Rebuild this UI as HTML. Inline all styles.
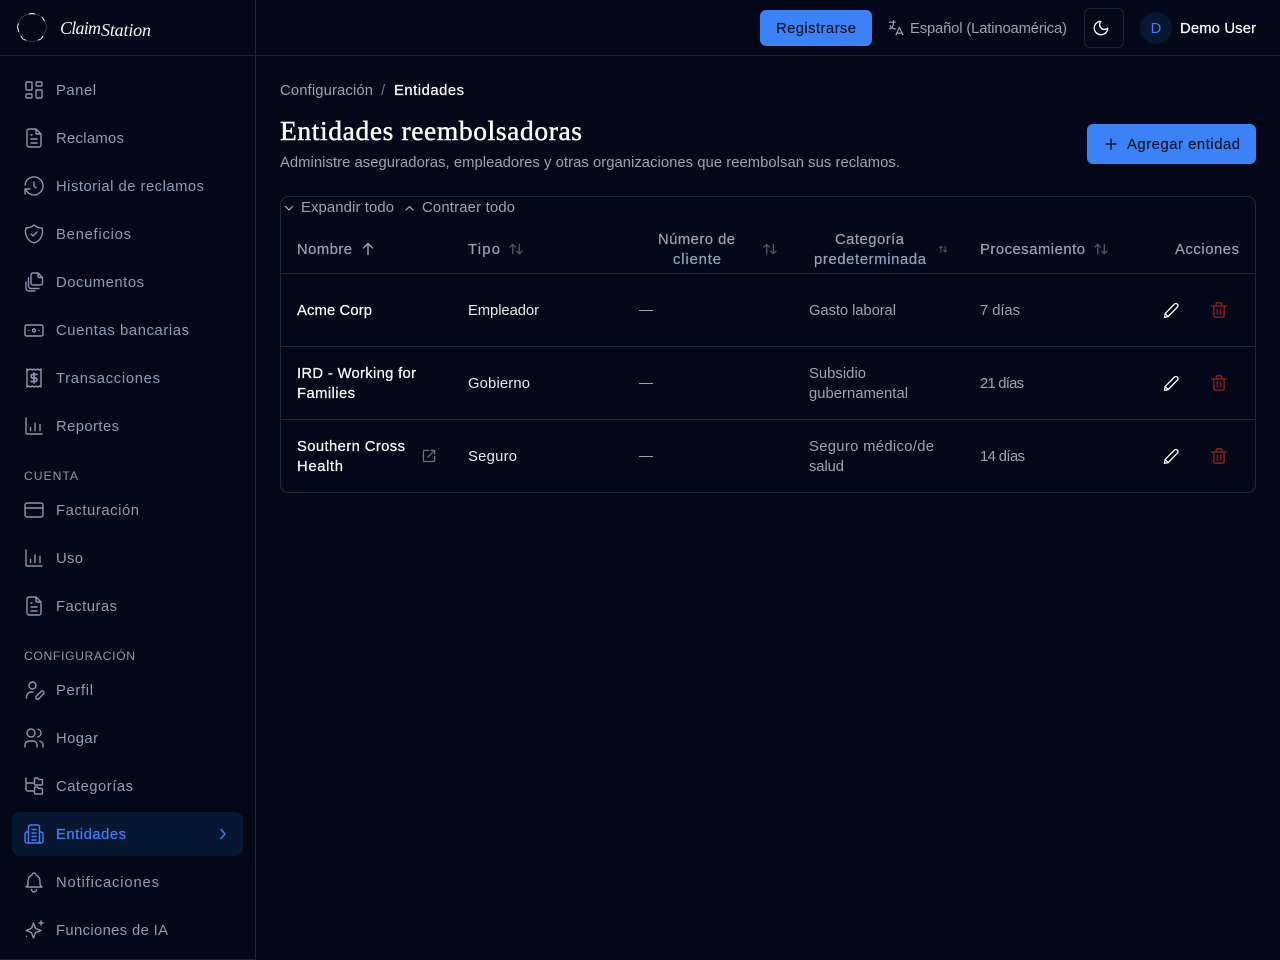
<!DOCTYPE html>
<html lang="es">
<head>
<meta charset="utf-8">
<title>Entidades reembolsadoras</title>
<style>
html,body{margin:0;padding:0;background:#020817;width:1280px;height:960px;overflow:hidden}
svg{display:block}
text{font-family:"Liberation Sans",sans-serif;font-size:14.8px;white-space:pre}
.n{fill:#8e9cb3}
.l{font-size:12.2px;fill:#8a96ad}
.mu{fill:#9ca3af}
.w{fill:#fff}
.e{fill:#e5e7eb}
.h{fill:#94a3b8}
.m{stroke-width:.2px;stroke:currentColor}
.i{fill:none;stroke:#8a96ad;stroke-width:1.4;stroke-linecap:round;stroke-linejoin:round}
.lg{font-family:"Liberation Serif",serif;font-style:italic;fill:#f4f5f7;font-size:18px}
</style>
</head>
<body>
<svg width="1280" height="960" viewBox="0 0 1280 960" xmlns="http://www.w3.org/2000/svg">
<defs>
<g id="dash"><path d="M5 4h4a1 1 0 0 1 1 1v6a1 1 0 0 1-1 1H5a1 1 0 0 1-1-1V5a1 1 0 0 1 1-1M5 16h4a1 1 0 0 1 1 1v2a1 1 0 0 1-1 1H5a1 1 0 0 1-1-1v-2a1 1 0 0 1 1-1M15 12h4a1 1 0 0 1 1 1v6a1 1 0 0 1-1 1h-4a1 1 0 0 1-1-1v-6a1 1 0 0 1 1-1M15 4h4a1 1 0 0 1 1 1v2a1 1 0 0 1-1 1h-4a1 1 0 0 1-1-1V5a1 1 0 0 1 1-1"/></g>
<g id="file"><path d="M14 3v4a1 1 0 0 0 1 1h4M17 21H7a2 2 0 0 1-2-2V5a2 2 0 0 1 2-2h7l5 5v11a2 2 0 0 1-2 2zM9 9h1M9 13h6M9 17h6"/></g>
<g id="hist"><path d="M12 8v4l2 2M3.05 11a9 9 0 1 1 .5 4m-.5 5v-5h5"/></g>
<g id="shield"><path d="M12 3a12 12 0 0 0 8 3a12 12 0 0 1-8 15a12 12 0 0 1-8-15a12 12 0 0 0 8-3M9 12l2 2l4-4"/></g>
<g id="docs"><path d="M11 3H16l4.500 4.500V13a2 2 0 0 1-2 2h-7.500a2 2 0 0 1-2-2V5a2 2 0 0 1 2-2zM16 3v3a1.500 1.500 0 0 0 1.500 1.500h3M6.500 8v8a2.500 2.500 0 0 0 2.500 2.500h8M4 12v6a3 3 0 0 0 3 3h6"/></g>
<g id="cash"><rect x="3" y="7" width="18" height="11" rx="1.500"/><circle cx="12" cy="12.500" r="1.500"/><path d="M7 12.500v.01M17 12.500v.01"/></g>
<g id="receipt"><path d="M5 21V3l1.750 1l1.750-1l1.750 1L12 3l1.750 1l1.750-1l1.750 1L19 3v18l-1.750-1l-1.750 1l-1.750-1L12 21l-1.750-1l-1.750 1l-1.750-1z"/><path d="M15 8.500h-4.200a1.750 1.750 0 0 0 0 3.500h2.400a1.750 1.750 0 0 1 0 3.500H9M12 7v10" stroke-width="1.700"/></g>
<g id="chart"><path d="M4 4v15a1 1 0 0 0 1 1h15M8.500 13.500v3M13 9v7.500M18 10.500v6"/></g>
<g id="card"><rect x="3" y="5" width="18" height="14" rx="2"/><path d="M3 10h18"/></g>
<g id="userpen"><circle cx="10.500" cy="7.500" r="3.500"/><path d="M4.500 20v-1a5 5 0 0 1 5-5h1.500M14 21v-2.500l5-5a1.700 1.700 0 0 1 2.500 2.500l-5 5z"/></g>
<g id="users"><path d="M5 7a4 4 0 1 0 8 0a4 4 0 1 0-8 0M3 21v-2a4 4 0 0 1 4-4h4a4 4 0 0 1 4 4v2M16 3.130a4 4 0 0 1 0 7.750M21 21v-2a4 4 0 0 0-3-3.850"/></g>
<g id="cats"><path d="M4 4v11a2 2 0 0 0 2 2h5.500M4 9h7.500M13.500 4h2l1.500 1.500h2.500a1 1 0 0 1 1 1V10a1 1 0 0 1-1 1h-6a1 1 0 0 1-1-1V5a1 1 0 0 1 1-1zM13.500 13h2l1.500 1.500h2.500a1 1 0 0 1 1 1V19a1 1 0 0 1-1 1h-6a1 1 0 0 1-1-1v-5a1 1 0 0 1 1-1z"/></g>
<g id="build"><path d="M6.500 21V5a2 2 0 0 1 2-2h7a2 2 0 0 1 2 2v16M6.500 10H5a2 2 0 0 0-2 2v7a2 2 0 0 0 2 2h14a2 2 0 0 0 2-2v-7a2 2 0 0 0-2-2h-1.500M10 7.500h4M10 11h4M10 14.500h4M10 18h4"/></g>
<g id="bell"><path d="M10 5a2 2 0 1 1 4 0a7 7 0 0 1 4 6v3a4 4 0 0 0 2 3H4a4 4 0 0 0 2-3v-3a7 7 0 0 1 4-6M9.500 19.500a2.500 2.500 0 0 0 5 0"/></g>
<g id="spark"><path d="M11.500 5l1.800 4.700a2 2 0 0 0 1 1L19 12.500l-4.700 1.800a2 2 0 0 0-1 1L11.500 20l-1.800-4.700a2 2 0 0 0-1-1L4 12.500l4.700-1.800a2 2 0 0 0 1-1zM19 3v4M17 5h4M4.500 18.500v.01"/></g>
<g id="sort"><path d="M3 9l4-4l4 4M7 5v14M21 15l-4 4l-4-4M17 19V5"/></g>
<g id="pencil"><path d="M4.500 20.500l.8-4.300L16 5.300a2.400 2.400 0 0 1 3.400 3.400L8.800 19.700zM5.300 16.200l3.500 3.500"/></g>
<g id="trash"><path d="M3 7h18M5.500 7v12a2 2 0 0 0 2 2h9a2 2 0 0 0 2-2V7M8.500 7V4.500a1.500 1.500 0 0 1 1.500-1.500h4a1.500 1.500 0 0 1 1.500 1.500V7M10 11v6M14 11v6"/></g>
</defs>

<rect width="1280" height="960" fill="#020817"/>
<path d="M255.500 0V960M0 55.500H1280" stroke="#1e293b" fill="none"/>
<path d="M0 959.500H255" stroke="#1e293b" fill="none"/>

<!-- logo -->
<path d="M32 13.500C36 14.500 39 15 42 17C45 21 46 24 46.500 27C45.500 32 44 35.500 41 39C37 40.500 35 41.500 32 41.500C28 41.500 26 40.500 23 39C20 35.500 18.500 32 17.500 27C18 24 19 21 22 17C25 15 28 14.500 32 13.500Z" fill="none" stroke="#fff" stroke-opacity=".25" stroke-width=".8"/>
<path d="M29 14.100Q30.500 13.700 32 13.500Q33.500 13.700 35 14.100M18.300 23.500Q18 25 17.500 27Q18 29.500 18.800 31.500M26 40.200Q24.500 39.700 23 39Q21.800 37.600 21 36.300M38 40.200Q39.500 39.700 41 39Q42.300 37.500 43 36M42 17Q43.500 19 44.500 21" fill="none" stroke="#fff" stroke-width=".9"/>
<text x="60" y="34" class="lg" textLength="41">Claim</text>
<text x="101" y="36" class="lg" textLength="50">Station</text>

<!-- sidebar -->
<g class="i">
<use href="#dash" x="22" y="78"/>
<use href="#file" x="22" y="126"/>
<use href="#hist" x="22" y="174"/>
<use href="#shield" x="22" y="222"/>
<use href="#docs" x="22" y="270"/>
<use href="#cash" x="22" y="318"/>
<use href="#receipt" x="22" y="366"/>
<use href="#chart" x="22" y="414"/>
<use href="#card" x="22" y="498"/>
<use href="#chart" x="22" y="546"/>
<use href="#file" x="22" y="594"/>
<use href="#userpen" x="22" y="678"/>
<use href="#users" x="22" y="726"/>
<use href="#cats" x="22" y="774"/>
<use href="#bell" x="22" y="870"/>
<use href="#spark" x="22" y="918"/>
</g>
<text x="56" y="95" class="n" textLength="40">Panel</text>
<text x="56" y="143" class="n" textLength="68">Reclamos</text>
<text x="56" y="191" class="n" textLength="148">Historial de reclamos</text>
<text x="56" y="239" class="n" textLength="75">Beneficios</text>
<text x="56" y="287" class="n" textLength="88">Documentos</text>
<text x="56" y="335" class="n" textLength="133">Cuentas bancarias</text>
<text x="56" y="383" class="n" textLength="104">Transacciones</text>
<text x="56" y="431" class="n" textLength="63">Reportes</text>
<text x="24" y="480" class="l" textLength="54">CUENTA</text>
<text x="56" y="515" class="n" textLength="83">Facturación</text>
<text x="56" y="563" class="n" textLength="27">Uso</text>
<text x="56" y="611" class="n" textLength="61">Facturas</text>
<text x="24" y="660" class="l" textLength="111">CONFIGURACIÓN</text>
<text x="56" y="695" class="n" textLength="37">Perfil</text>
<text x="56" y="743" class="n" textLength="42">Hogar</text>
<text x="56" y="791" class="n" textLength="77">Categorías</text>
<rect x="12" y="812" width="231" height="44" rx="8" fill="#081731"/>
<use href="#build" x="22" y="822" class="i" style="stroke:#3b82f6"/>
<text x="56" y="839" textLength="70" fill="#3b82f6" class="m" style="color:#3b82f6">Entidades</text>
<path d="M221 829.500l4 4.500l-4 4.500" fill="none" stroke="#3b82f6" stroke-width="1.400" stroke-linecap="round" stroke-linejoin="round"/>
<text x="56" y="887" class="n" textLength="103">Notificaciones</text>
<text x="56" y="935" class="n" textLength="112">Funciones de IA</text>

<!-- top bar -->
<rect x="760" y="10" width="112" height="36" rx="6" fill="#3b82f6"/>
<text x="776" y="33" fill="#0f172a" textLength="80" class="m" style="color:#0f172a">Registrarse</text>
<g transform="translate(886 18) scale(.84)" class="i" style="stroke:#9ca3af"><path d="M4 5h7M9 3v2c0 4.418-2.239 8-5 8M5 9c0 2.144 2.952 3.908 6.700 4M12 20l4-9l4 9M19.100 18h-6.200"/></g>
<text x="910" y="33" class="mu" textLength="157">Español (Latinoamérica)</text>
<rect x="1084.500" y="8.500" width="39" height="39" rx="6" fill="#020817" stroke="#1e293b"/>
<g transform="translate(1092 19) scale(.75)"><path d="M12 3a6 6 0 0 0 9 9a9 9 0 1 1-9-9Z" fill="none" stroke="#fff" stroke-width="1.800" stroke-linecap="round" stroke-linejoin="round"/></g>
<circle cx="1156" cy="28" r="16" fill="#081731"/>
<text x="1156" y="33" fill="#3b82f6" text-anchor="middle">D</text>
<text x="1180" y="33" class="w m" style="color:#fff" textLength="76">Demo User</text>

<!-- page head -->
<text x="280" y="95" class="mu" textLength="93">Configuración</text>
<text x="381" y="95" fill="#6b7280">/</text>
<text x="394" y="95" class="w m" style="color:#fff" textLength="70">Entidades</text>
<text x="280" y="140" textLength="302" style="font-family:'Liberation Serif',serif;font-size:27.5px;fill:#fff;stroke:#fff;stroke-width:.45px">Entidades reembolsadoras</text>
<text x="280" y="167" class="mu" textLength="620">Administre aseguradoras, empleadores y otras organizaciones que reembolsan sus reclamos.</text>
<rect x="1087" y="124" width="169" height="40" rx="6" fill="#3b82f6"/>
<path d="M1111 139v10M1106 144h10" stroke="#0f172a" stroke-width="1.500" stroke-linecap="round" fill="none"/>
<text x="1127" y="149" fill="#0f172a" textLength="113" class="m" style="color:#0f172a">Agregar entidad</text>

<!-- table -->
<rect x="280.500" y="196.500" width="975" height="296" rx="8" fill="none" stroke="#1e293b"/>
<path d="M281 273.500H1255M281 346.500H1255M281 419.500H1255" stroke="#1e293b" fill="none"/>
<path d="M285.500 206.500l3.500 3.500l3.500-3.500M406 210l3.500-3.500l3.500 3.500" fill="none" stroke="#aab4c4" stroke-width="1.200" stroke-linecap="round" stroke-linejoin="round"/>
<text x="301" y="212" class="mu" textLength="93">Expandir todo</text>
<text x="422" y="212" class="mu" textLength="93">Contraer todo</text>

<text x="297" y="254" class="h m" style="color:#94a3b8" textLength="55">Nombre</text>
<path d="M368 243.500v11M363.500 248l4.500-4.500l4.500 4.500" fill="none" stroke="#9ca3af" stroke-width="1.400" stroke-linecap="round" stroke-linejoin="round"/>
<text x="468" y="254" class="h m" style="color:#94a3b8" textLength="32">Tipo</text>
<use href="#sort" transform="translate(508 241) scale(.67)" style="fill:none;stroke:#475569;stroke-width:2;stroke-linecap:round;stroke-linejoin:round"/>
<text x="658" y="244" class="h m" style="color:#94a3b8" textLength="77">Número de</text>
<text x="673" y="264" class="h m" style="color:#94a3b8" textLength="48">cliente</text>
<use href="#sort" transform="translate(762 241) scale(.67)" style="fill:none;stroke:#475569;stroke-width:2;stroke-linecap:round;stroke-linejoin:round"/>
<text x="835" y="244" class="h m" style="color:#94a3b8" textLength="69">Categoría</text>
<text x="814" y="264" class="h m" style="color:#94a3b8" textLength="112">predeterminada</text>
<use href="#sort" transform="translate(938 244) scale(.42)" style="fill:none;stroke:#475569;stroke-width:2.500;stroke-linecap:round;stroke-linejoin:round"/>
<text x="980" y="254" class="h m" style="color:#94a3b8" textLength="105">Procesamiento</text>
<use href="#sort" transform="translate(1093 241) scale(.67)" style="fill:none;stroke:#475569;stroke-width:2;stroke-linecap:round;stroke-linejoin:round"/>
<text x="1175" y="254" class="h m" style="color:#94a3b8" textLength="64">Acciones</text>

<!-- row 1 -->
<text x="297" y="315" class="w m" style="color:#fff" textLength="75">Acme Corp</text>
<text x="468" y="315" class="e" textLength="71">Empleador</text>
<path d="M639 310.500h14" stroke="#9ca3af"/>
<text x="809" y="315" class="mu" textLength="87">Gasto laboral</text>
<text x="980" y="315" class="mu" textLength="40">7 días</text>
<!-- row 2 -->
<text x="297" y="378" class="w m" style="color:#fff" textLength="119">IRD - Working for</text>
<text x="297" y="398" class="w m" style="color:#fff" textLength="58">Families</text>
<text x="468" y="388" class="e" textLength="62">Gobierno</text>
<path d="M639 383.500h14" stroke="#9ca3af"/>
<text x="809" y="378" class="mu" textLength="57">Subsidio</text>
<text x="809" y="398" class="mu" textLength="99">gubernamental</text>
<text x="980" y="388" class="mu" textLength="44">21 días</text>
<!-- row 3 -->
<text x="297" y="451" class="w m" style="color:#fff" textLength="108">Southern Cross</text>
<text x="297" y="471" class="w m" style="color:#fff" textLength="46">Health</text>
<g transform="translate(421.600 448.500) scale(.62)" style="fill:none;stroke:#6b7280;stroke-width:2;stroke-linecap:round;stroke-linejoin:round"><path d="M21 13v6a2 2 0 0 1-2 2H5a2 2 0 0 1-2-2V5a2 2 0 0 1 2-2h6M15 3h6v6M10 14L21 3"/></g>
<text x="468" y="461" class="e" textLength="49">Seguro</text>
<path d="M639 456.500h14" stroke="#9ca3af"/>
<text x="809" y="451" class="mu" textLength="125">Seguro médico/de</text>
<text x="809" y="471" class="mu" textLength="35">salud</text>
<text x="980" y="461" class="mu" textLength="45">14 días</text>

<!-- actions -->
<g style="fill:none;stroke:#fff;stroke-width:1.500;stroke-linecap:round;stroke-linejoin:round">
<use href="#pencil" transform="translate(1160.500 299.500) scale(.87)"/>
<use href="#pencil" transform="translate(1160.500 372.500) scale(.87)"/>
<use href="#pencil" transform="translate(1160.500 445.500) scale(.87)"/>
</g>
<g style="fill:none;stroke:#7f1d1d;stroke-width:2;stroke-linecap:round;stroke-linejoin:round">
<use href="#trash" transform="translate(1209.400 300.400) scale(.8)"/>
<use href="#trash" transform="translate(1209.400 373.400) scale(.8)"/>
<use href="#trash" transform="translate(1209.400 446.400) scale(.8)"/>
</g>
</svg>
</body>
</html>
